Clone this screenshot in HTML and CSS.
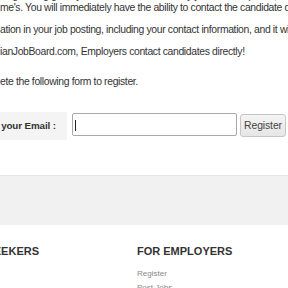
FILE: index.html
```html
<!DOCTYPE html>
<html lang="en">

<head>
    <meta charset="UTF-8" />
    <meta name="viewport" content="width=device-width, initial-scale=1.0" />
    <title>Employer Registration</title>
    <link rel="stylesheet" href="styles.css">
</head>

<body>
    <div class="content">
        <div class="cut">Registering gives you instant access to every job seeker's profile, along with their resu</div>
        <div class="intro">
            <div>me's. You will immediately have the ability to contact the candidate directly.</div>
            <div>ation in your job posting, including your contact information, and it will be</div>
            <div>ianJobBoard.com, Employers contact candidates directly!</div>
        </div>
        <p class="note">ete the following form to register.</p>

        <form class="form-row" onsubmit="return false">
            <label class="label" for="email">your Email :</label>
            <span class="field">
                <input type="text" id="email" class="email">
                <span class="caret"></span>
            </span>
            <button type="submit" class="register">Register</button>
        </form>
    </div>

    <div class="band"></div>

    <div class="footer">
        <div class="col">
            <h3>FOR JOB SEEKERS</h3>
            <ul>
                <li><a href="#">Search Jobs</a></li>
                <li><a href="#">Post Resume</a></li>
            </ul>
        </div>
        <div class="col">
            <h3>FOR EMPLOYERS</h3>
            <ul>
                <li><a href="#">Register</a></li>
                <li><a href="#">Post Jobs</a></li>
            </ul>
        </div>
    </div>
</body>

</html>
```

FILE: styles.css
```css
body {
    margin: 0;
    font-family: "Liberation Sans", Arial, sans-serif;
    color: #333;
    background-color: #fff;
    white-space: nowrap;
    overflow: hidden;
    height: 288px;
}

.content {
    font-size: 10.4px;
    letter-spacing: -0.35px;
}

.cut {
    line-height: 12px;
    margin-top: -10px;
}

.intro {
    line-height: 22px;
    margin-top: -5px;
}

.note {
    line-height: 22px;
    margin: 8px 0 0;
}

.form-row {
    display: flex;
    align-items: flex-start;
    margin-top: 18.5px;
    letter-spacing: 0;
}

.label {
    width: 67px;
    height: 28px;
    line-height: 28px;
    padding-right: 11px;
    box-sizing: border-box;
    text-align: right;
    background-color: #f4f4f4;
    font-size: 9.8px;
    font-weight: bold;
    letter-spacing: -0.1px;
}

.field {
    position: relative;
    margin: 1px 0 0 5px;
}

.email {
    display: block;
    width: 165px;
    height: 23px;
    box-sizing: border-box;
    margin: 0;
    border: 1px solid #a9a9a9;
    border-radius: 2px;
    background: #fff;
    outline: none;
}

.caret {
    position: absolute;
    left: 3px;
    top: 7px;
    width: 1px;
    height: 11px;
    background-color: #222;
}

.register {
    margin: 2px 0 0 3px;
    width: 46px;
    height: 23px;
    padding: 0;
    border: 1px solid #c6c6c6;
    border-radius: 3px;
    background: linear-gradient(#f4f4f4, #e6e6e6);
    color: #444;
    font-family: "Liberation Sans", Arial, sans-serif;
    font-size: 10.4px;
    letter-spacing: -0.1px;
}

.band {
    margin-top: 35px;
    height: 49px;
    border-top: 1px solid #e4e4e4;
    background-color: #f1f1f1;
}

.footer {
    display: grid;
    grid-template-columns: 202.5px 1fr;
    margin-left: -65.5px;
    padding-top: 19px;
}

.footer h3 {
    margin: 0;
    font-size: 11px;
    line-height: 14px;
    font-weight: bold;
    color: #333;
}

.footer ul {
    list-style: none;
    margin: 9px 0 0;
    padding: 0;
}

.footer li {
    font-size: 8px;
    line-height: 14px;
}

.footer a {
    color: #888;
    text-decoration: none;
}
```
